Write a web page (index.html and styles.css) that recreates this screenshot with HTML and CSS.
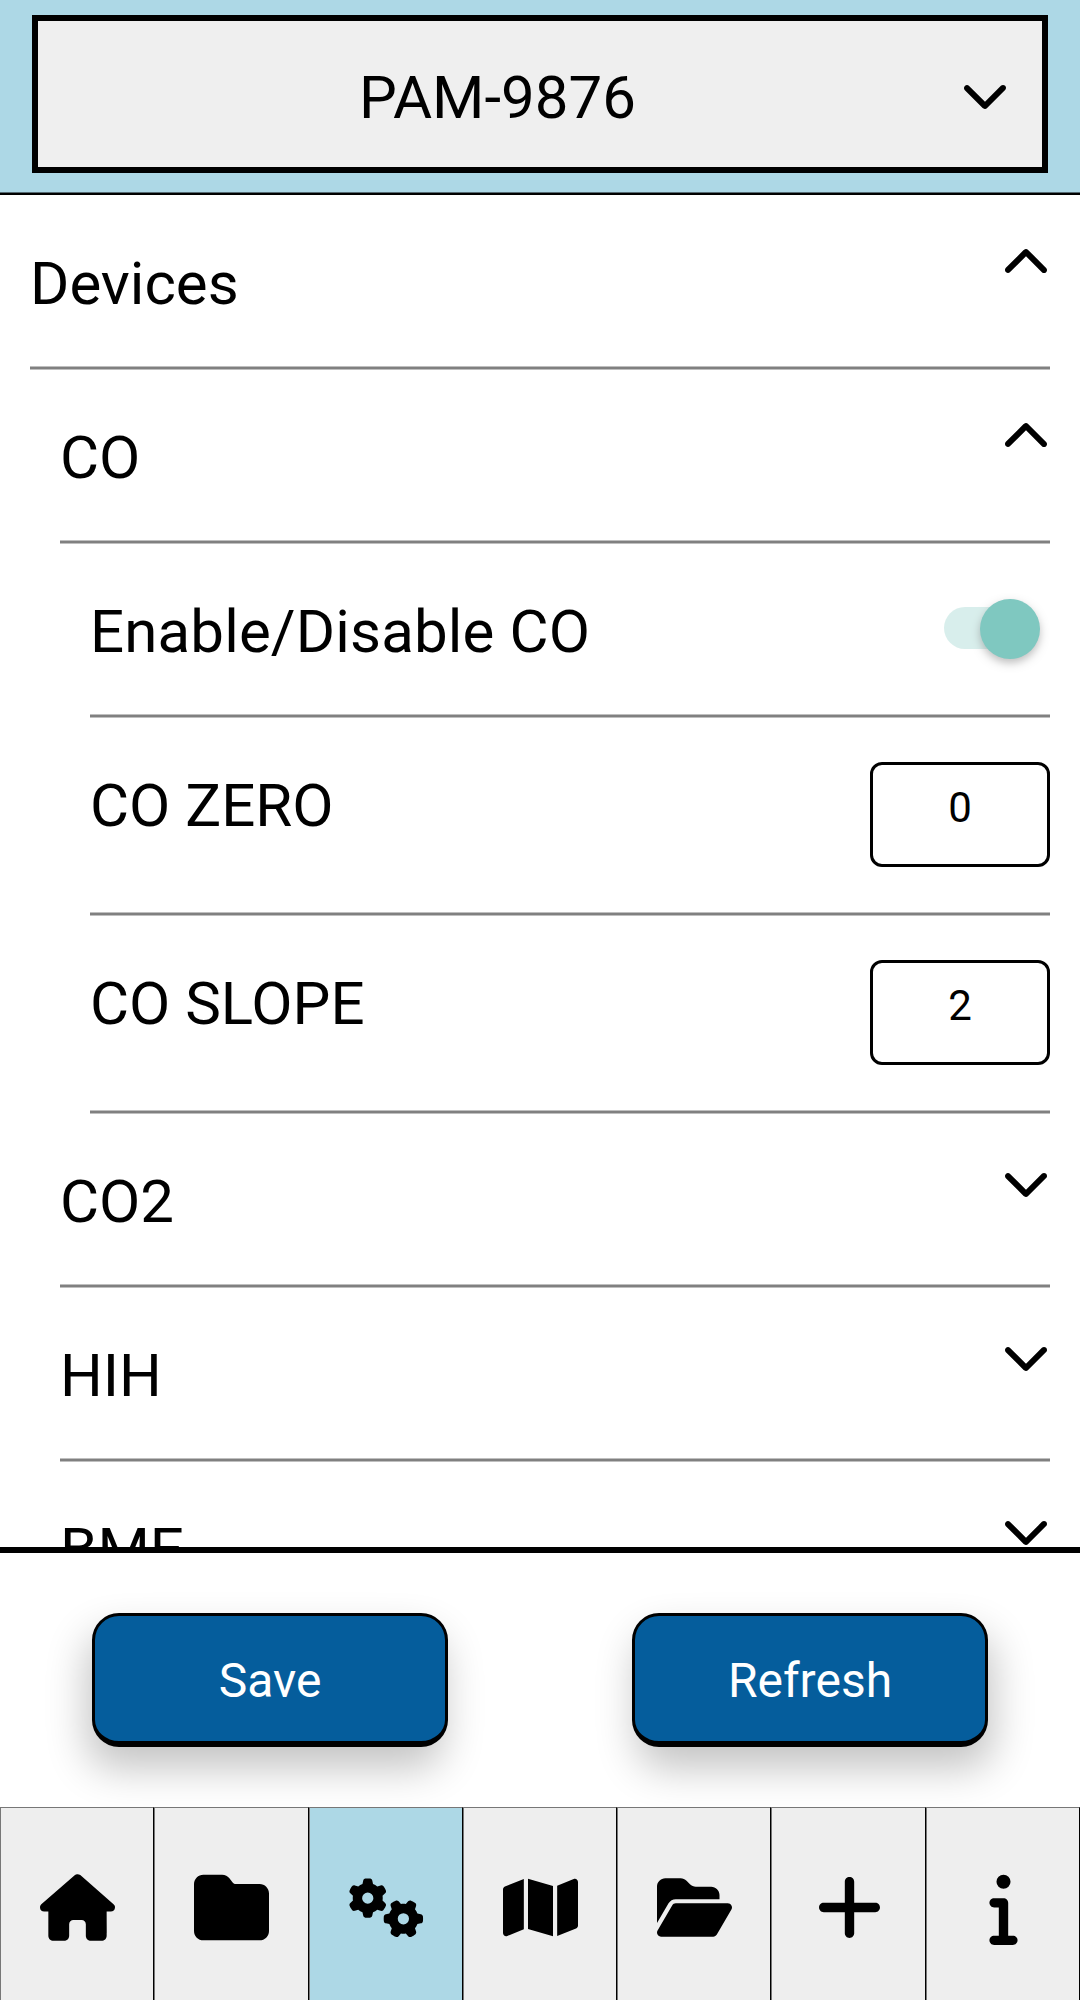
FILE: index.html
```html
<!DOCTYPE html>
<html lang="en">
<head>
<meta charset="utf-8">
<title>Device settings</title>
<link rel="stylesheet" href="styles.css">
</head>
<body>
<svg class="sprite" width="0" height="0" aria-hidden="true">
  <symbol id="chevron-down" viewBox="0 0 512 512"><path d="M233.4 406.6c12.5 12.5 32.8 12.5 45.3 0l192-192c12.5-12.5 12.5-32.8 0-45.3s-32.8-12.5-45.3 0L256 338.7 86.6 169.4c-12.5-12.5-32.8-12.5-45.3 0s-12.5 32.8 0 45.3l192 192z"/></symbol>
  <symbol id="chevron-up" viewBox="0 0 512 512"><path d="M233.4 105.4c12.5-12.5 32.8-12.5 45.3 0l192 192c12.5 12.5 12.5 32.8 0 45.3s-32.8 12.5-45.3 0L256 173.3 86.6 342.6c-12.5 12.5-32.8 12.5-45.3 0s-12.5-32.8 0-45.3l192-192z"/></symbol>
</svg>
<div class="app">
  <header class="header">
    <button class="picker">
      <span class="picker-label">PAM-9876</span>
      <svg class="chevron"><use href="#chevron-down"/></svg>
    </button>
  </header>

  <main class="settings">
    <section class="row">
      <span class="label">Devices</span>
      <svg class="chevron"><use href="#chevron-up"/></svg>
    </section>
    <section class="row level-1">
      <span class="label">CO</span>
      <svg class="chevron"><use href="#chevron-up"/></svg>
    </section>
    <section class="row level-2">
      <span class="label label-wide">Enable/Disable CO</span>
      <span class="switch"><span class="thumb"></span></span>
    </section>
    <section class="row row-input level-2">
      <span class="label">CO ZERO</span>
      <span class="field">0</span>
    </section>
    <section class="row row-input level-2">
      <span class="label">CO SLOPE</span>
      <span class="field">2</span>
    </section>
    <section class="row level-1">
      <span class="label">CO2</span>
      <svg class="chevron"><use href="#chevron-down"/></svg>
    </section>
    <section class="row level-1">
      <span class="label">HIH</span>
      <svg class="chevron"><use href="#chevron-down"/></svg>
    </section>
    <section class="row level-1">
      <span class="label">BME</span>
      <svg class="chevron"><use href="#chevron-down"/></svg>
    </section>
  </main>

  <div class="actions">
    <button class="btn btn-save">Save</button>
    <button class="btn btn-refresh">Refresh</button>
  </div>

  <nav class="tabs">
    <a class="tab"><svg class="icon" viewBox="0 0 576 512"><path d="M575.8 255.5C575.8 273.5 560.8 287.6 543.8 287.6H511.8L512.5 447.7C512.5 450.5 512.3 453.1 512 455.8V472C512 494.1 494.1 512 472 512H456C454.9 512 453.8 511.1 452.7 511.9C451.3 511.1 449.9 512 448.5 512H392C369.9 512 352 494.1 352 472V384C352 366.3 337.7 352 320 352H256C238.3 352 224 366.3 224 384V472C224 494.1 206.1 512 184 512H128.1C126.6 512 125.1 511.9 123.6 511.8C122.4 511.9 121.2 512 120 512H104C81.91 512 64 494.1 64 472V360C64 359.1 64.03 358.1 64.09 357.2V287.6H32.05C14.02 287.6 0 273.5 0 255.5C0 246.5 3.004 238.5 10.01 231.5L266.4 8.016C273.4 1.002 281.4 0 288.4 0C295.4 0 303.4 2.004 309.5 7.014L564.8 231.5C572.8 238.5 576.9 246.5 575.8 255.5L575.8 255.5z"/></svg></a>
    <a class="tab"><svg class="icon" viewBox="0 0 512 512"><path d="M64 480H448c35.3 0 64-28.7 64-64V160c0-35.3-28.7-64-64-64H288c-10.1 0-19.6-4.7-25.6-12.8L243.2 57.6C231.1 41.5 212.1 32 192 32H64C28.7 32 0 60.7 0 96V416c0 35.3 28.7 64 64 64z"/></svg></a>
    <a class="tab active"><svg class="icon" viewBox="0 0 640 512"><path d="M308.5 135.3c7.1-6.3 9.9-16.2 6.2-25c-2.3-5.3-4.8-10.5-7.6-15.5L304 89.4c-3-5-6.3-9.9-9.8-14.6c-5.7-7.6-15.7-10.1-24.7-7.1l-28.2 9.3c-10.7-8.8-23-16-36.2-20.9L199 27.1c-1.9-9.3-9.1-16.7-18.5-17.8C173.9 8.4 167.2 8 160.4 8h-.7c-6.8 0-13.5 .4-20.1 1.2c-9.4 1.1-16.6 8.6-18.5 17.8L115 56.1c-13.3 5-25.5 12.1-36.2 20.9L50.5 67.8c-9-3-19-.5-24.7 7.1c-3.5 4.7-6.8 9.6-9.9 14.6l-3 5.3c-2.8 5-5.3 10.2-7.6 15.6c-3.7 8.7-.9 18.6 6.2 25l22.2 19.8C32.6 161.9 32 168.9 32 176s.6 14.1 1.7 20.9L11.5 216.7c-7.1 6.3-9.9 16.2-6.2 25c2.3 5.3 4.8 10.5 7.6 15.6l3 5.2c3 5.1 6.3 9.9 9.9 14.6c5.7 7.6 15.7 10.1 24.7 7.1l28.2-9.3c10.7 8.8 23 16 36.2 20.9l6.1 29.1c1.9 9.3 9.1 16.7 18.5 17.8c6.7 .8 13.5 1.2 20.4 1.2s13.7-.4 20.4-1.2c9.4-1.1 16.6-8.6 18.5-17.8l6.1-29.1c13.3-5 25.5-12.1 36.2-20.9l28.2 9.3c9 3 19 .5 24.7-7.1c3.5-4.7 6.8-9.5 9.8-14.6l3.1-5.4c2.8-5 5.3-10.2 7.6-15.5c3.7-8.7 .9-18.6-6.2-25l-22.2-19.8c1.1-6.8 1.7-13.8 1.7-20.9s-.6-14.1-1.7-20.9l22.2-19.8zM112 176a48 48 0 1 1 96 0 48 48 0 1 1 -96 0zM504.7 500.5c6.3 7.1 16.2 9.9 25 6.2c5.3-2.3 10.5-4.8 15.5-7.6l5.4-3.1c5-3 9.9-6.3 14.6-9.8c7.6-5.7 10.1-15.7 7.1-24.7l-9.3-28.2c8.8-10.7 16-23 20.9-36.2l29.1-6.1c9.3-1.9 16.7-9.1 17.8-18.5c.8-6.7 1.2-13.5 1.2-20.4s-.4-13.7-1.2-20.4c-1.1-9.4-8.6-16.6-17.8-18.5L583.9 307c-5-13.3-12.1-25.5-20.9-36.2l9.3-28.2c3-9 .5-19-7.1-24.7c-4.7-3.5-9.6-6.8-14.6-9.9l-5.3-3c-5-2.8-10.2-5.3-15.6-7.6c-8.7-3.7-18.6-.9-25 6.2l-19.8 22.2c-6.8-1.1-13.8-1.7-20.9-1.7s-14.1 .6-20.9 1.7l-19.8-22.2c-6.3-7.1-16.2-9.9-25-6.2c-5.3 2.3-10.5 4.8-15.6 7.6l-5.2 3c-5.1 3-9.9 6.3-14.6 9.9c-7.6 5.7-10.1 15.7-7.1 24.7l9.3 28.2c-8.8 10.7-16 23-20.9 36.2L315.1 313c-9.3 1.9-16.7 9.1-17.8 18.5c-.8 6.7-1.2 13.5-1.2 20.4s.4 13.7 1.2 20.4c1.1 9.4 8.6 16.6 17.8 18.5l29.1 6.1c5 13.3 12.1 25.5 20.9 36.2l-9.3 28.2c-3 9-.5 19 7.1 24.7c4.7 3.5 9.5 6.8 14.6 9.8l5.4 3.1c5 2.8 10.2 5.3 15.5 7.6c8.7 3.7 18.6 .9 25-6.2l19.8-22.2c6.8 1.1 13.8 1.7 20.9 1.7s14.1-.6 20.9-1.7l19.8 22.2zM464 304a48 48 0 1 1 0 96 48 48 0 1 1 0-96z"/></svg></a>
    <a class="tab"><svg class="icon" viewBox="0 0 576 512"><path d="M384 476.1L192 421.2V35.9L384 90.8V476.1zm32-1.2V88.4L543.1 37.5c15.8-6.3 32.9 5.3 32.9 22.3V394.6c0 9.8-6 18.6-15.1 22.3L416 474.8zM15.1 95.1L160 37.2V423.6L32.9 474.5C17.1 480.8 0 469.2 0 452.2V117.4c0-9.8 6-18.6 15.1-22.3z"/></svg></a>
    <a class="tab"><svg class="icon" viewBox="0 0 576 512"><path d="M88.7 223.8L0 375.8V96C0 60.7 28.7 32 64 32H181.5c17 0 33.3 6.7 45.3 18.7l26.5 26.5c12 12 28.3 18.7 45.3 18.7H416c35.3 0 64 28.7 64 64v32H144c-22.8 0-43.8 12.1-55.3 31.8zm27.6 16.1C122.1 230 132.6 224 144 224H544c11.5 0 22 6.1 27.7 16.1s5.7 22.2-.1 32.1l-112 192C453.9 474 443.4 480 432 480H32c-11.5 0-22-6.1-27.7-16.1s-5.7-22.2 .1-32.1l112-192z"/></svg></a>
    <a class="tab"><svg class="icon" viewBox="0 0 448 512"><path d="M256 80c0-17.7-14.3-32-32-32s-32 14.3-32 32V224H48c-17.7 0-32 14.3-32 32s14.3 32 32 32H192V432c0 17.7 14.3 32 32 32s32-14.3 32-32V288H400c17.7 0 32-14.3 32-32s-14.3-32-32-32H256V80z"/></svg></a>
    <a class="tab"><svg class="icon" viewBox="0 0 192 512"><path d="M48 80a48 48 0 1 1 96 0A48 48 0 1 1 48 80zM0 224c0-17.7 14.3-32 32-32H96c17.7 0 32 14.3 32 32V448h32c17.7 0 32 14.3 32 32s-14.3 32-32 32H32c-17.7 0-32-14.3-32-32s14.3-32 32-32H64V256H32c-17.7 0-32-14.3-32-32z"/></svg></a>
  </nav>
</div>
</body>
</html>
```
FILE: styles.css
```css
* {
  box-sizing: border-box;
}

body {
  margin: 0;
  background: #fff;
  color: #000;
  font-family: Roboto, sans-serif;
}

.sprite {
  display: none;
}

.app {
  display: flex;
  flex-direction: column;
  height: 2000px;
  overflow: hidden;
}

/* Device picker */
.header {
  flex: none;
  height: 195px;
  padding: 15px 32px 0;
  background: #add8e6;
  border-bottom: 2px solid #000;
  box-shadow: inset 0 -1px #566b72;
}

.picker {
  display: flex;
  align-items: center;
  width: 100%;
  height: 158px;
  padding: 0 33px 0 0;
  border: 6px solid #000;
  border-radius: 0;
  background: #efefef;
  color: #000;
  font: 60px/70px Roboto, sans-serif;
}

.picker-label {
  flex: 1;
  text-align: center;
  padding: 7px 4px 0 0;
}

.chevron {
  flex: none;
  width: 48px;
  height: 48px;
}

/* Settings list */
.settings {
  flex: none;
  height: 1352px;
  padding: 1px 30px 0;
  overflow: hidden;
}

.row {
  display: flex;
  justify-content: space-between;
  align-items: flex-start;
  height: 174px;
  padding-top: 44px;
  background: linear-gradient(#bfbfbf 1px, #808080 1px 3px, #bfbfbf 3px) bottom / 100% 4px no-repeat;
}

.row-input {
  height: 198px;
}

.level-1 {
  margin-left: 30px;
}

.level-2 {
  margin-left: 60px;
}

.label {
  padding-top: 9px;
  font-size: 60px;
  line-height: 70px;
}

.label-wide {
  letter-spacing: 0.15px;
}

.switch {
  display: flex;
  align-items: center;
  justify-content: flex-end;
  width: 90px;
  height: 42px;
  margin: 19px 16px 0 0;
  border-radius: 21px;
  background: #b3dfda;
  opacity: 0.5;
}

.thumb {
  flex: none;
  width: 60px;
  height: 60px;
  margin: 1px -5.5px 0 0;
  border-radius: 50%;
  background: #019283;
  box-shadow: 0 4px 8px rgba(0, 0, 0, 0.5);
}

.field {
  width: 180px;
  height: 105px;
  padding-top: 18px;
  border: 3px solid #000;
  border-radius: 12px;
  font-size: 42px;
  line-height: 50px;
  text-align: center;
}

/* Action buttons */
.actions {
  flex: none;
  display: grid;
  grid-template-columns: 1fr 1fr;
  justify-items: center;
  align-items: start;
  height: 260px;
  padding-top: 60px;
  border-top: 6px solid #000;
}

.btn {
  width: 356px;
  height: 134px;
  padding: 4px 0 0;
  border: 3px solid #000;
  border-bottom-width: 6px;
  border-radius: 27px;
  background: #055d9c;
  color: #fff;
  font: 48px/56px Roboto, sans-serif;
}

.btn-save {
  box-shadow: -5px 21px 42px rgba(0, 0, 0, 0.24);
}

.btn-refresh {
  box-shadow: 5px 21px 42px rgba(0, 0, 0, 0.24);
}

/* Bottom tabs */
.tabs {
  flex: 1;
  display: grid;
  grid-template-columns: repeat(7, 1fr);
}

.tab {
  display: flex;
  align-items: center;
  justify-content: center;
  padding: 7px 0 0 1px;
  border: solid #777;
  border-width: 1px 1px 0;
  border-right-color: #000;
  background: #eee;
}

.active {
  background: #add8e6;
}

.icon {
  width: 75px;
  height: 75px;
}
```
